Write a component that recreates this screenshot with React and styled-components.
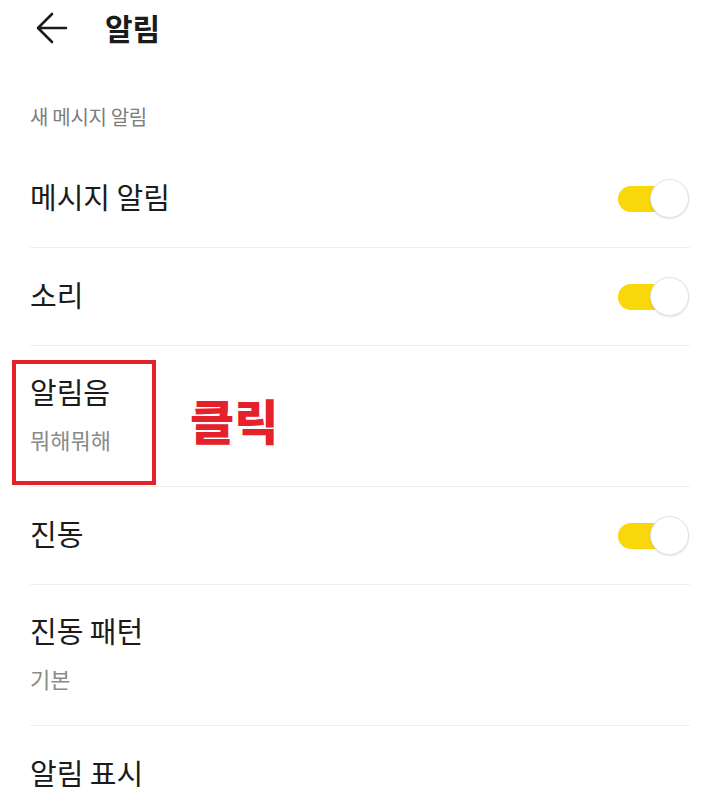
import styled, { createGlobalStyle } from "styled-components";

const GlobalStyle = createGlobalStyle`
  html, body {
    margin: 0;
    padding: 0;
    background: #ffffff;
    overflow: hidden;
  }
  body {
    font-family: "Noto Sans CJK KR", "Noto Sans", sans-serif;
    color: #1b1b1b;
  }
`;

const items = [
  { title: "메시지 알림", toggle: true },
  { title: "소리", toggle: true },
  { title: "알림음", sub: "뭐해뭐해", marked: true },
  { title: "진동", toggle: true },
  { title: "진동 패턴", sub: "기본" },
  { title: "알림 표시" },
];

function BackArrow() {
  return (
    <svg width="32" height="32" viewBox="0 0 32 32" fill="none">
      <path
        d="M30 16H3M16 2L2 16l14 14"
        stroke="#1b1b1b"
        strokeWidth="2.6"
        strokeLinecap="round"
        strokeLinejoin="round"
      />
    </svg>
  );
}

function App() {
  return (
    <>
      <GlobalStyle />
      <Page>
        <Header>
          <BackButton>
            <BackArrow />
          </BackButton>
          <Title>알림</Title>
        </Header>
        <SectionLabel>새 메시지 알림</SectionLabel>
        <List>
          {items.map((item) => (
            <Row key={item.title} $tall={!!item.sub}>
              <Texts>
                <ItemTitle>{item.title}</ItemTitle>
                {item.sub && <ItemSub>{item.sub}</ItemSub>}
              </Texts>
              {item.toggle && (
                <Switch>
                  <Knob />
                </Switch>
              )}
              {item.marked && (
                <>
                  <Highlight />
                  <ClickLabel>클릭</ClickLabel>
                </>
              )}
            </Row>
          ))}
        </List>
      </Page>
    </>
  );
}
export default App;

const Page = styled.div`
  width: 720px;
`;

const Header = styled.header`
  display: flex;
  align-items: center;
  height: 54px;
  padding-left: 36px;
  gap: 37px;
`;

const BackButton = styled.div`
  display: flex;
  align-items: center;
  justify-content: center;
  width: 32px;
  height: 32px;
  margin-top: 2px;
`;

const Title = styled.h1`
  margin: 0;
  font-size: 30px;
  font-weight: 700;
  line-height: 36px;
  color: #1b1b1b;
`;

const SectionLabel = styled.div`
  padding: 51px 30px 21px;
  font-size: 20px;
  line-height: 24px;
  letter-spacing: -0.3px;
  color: #7d7d7d;
`;

const List = styled.div`
  padding: 0 30px;
`;

const Row = styled.div`
  position: relative;
  display: flex;
  align-items: center;
  justify-content: space-between;
  min-height: ${(p) => (p.$tall ? "140px" : "97px")};
  border-bottom: 1px solid #efefef;
`;

const Texts = styled.div`
  display: flex;
  flex-direction: column;
  gap: 15px;
  padding-bottom: 5px;
`;

const ItemTitle = styled.div`
  font-size: 29px;
  line-height: 36px;
  color: #1b1b1b;
`;

const ItemSub = styled.div`
  font-size: 22px;
  line-height: 30px;
  color: #8a8a8a;
`;

const Switch = styled.div`
  position: relative;
  display: flex;
  align-items: center;
  justify-content: flex-end;
  width: 71px;
  height: 38px;
  margin-right: 1px;
  &::before {
    content: "";
    position: absolute;
    left: 0;
    top: 6px;
    width: 60px;
    height: 26px;
    border-radius: 13px;
    background: #f9d70b;
  }
`;

const Knob = styled.div`
  position: relative;
  width: 37px;
  height: 37px;
  border-radius: 50%;
  background: #ffffff;
  border: 1px solid #e2e2e2;
  box-shadow: 0 1px 2px rgba(0, 0, 0, 0.12);
`;

const Highlight = styled.div`
  position: absolute;
  left: -18px;
  top: 14px;
  width: 136px;
  height: 117px;
  border: 4px solid #e5212b;
  pointer-events: none;
`;

const ClickLabel = styled.div`
  position: absolute;
  left: 160px;
  top: 44px;
  font-size: 48px;
  font-weight: 900;
  line-height: 58px;
  color: #e5212b;
`;
